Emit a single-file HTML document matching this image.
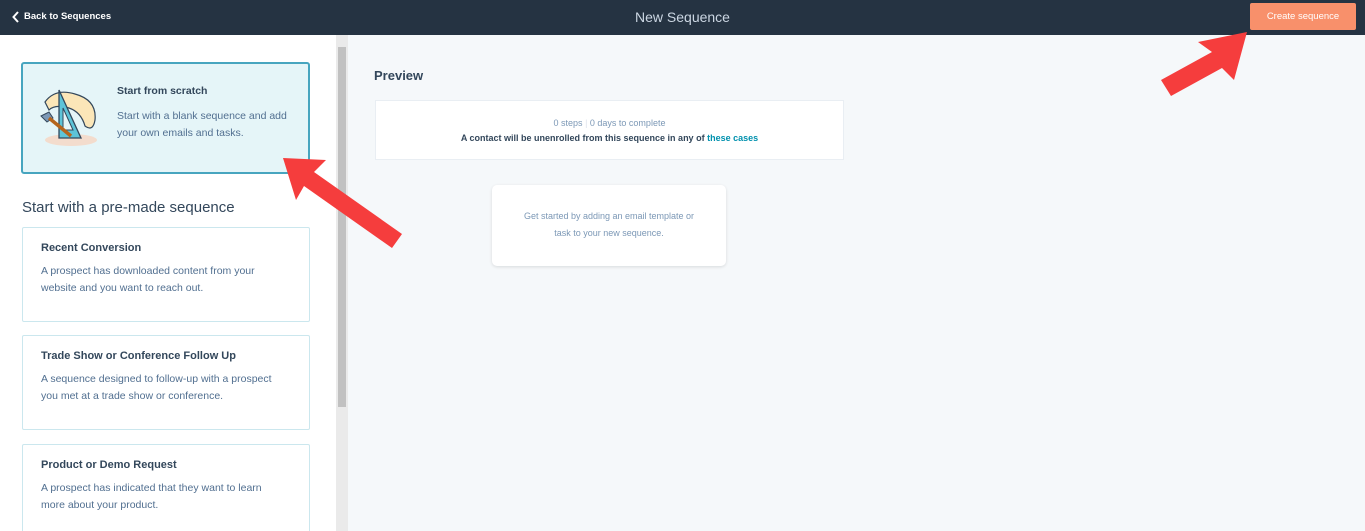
<!DOCTYPE html>
<html><head><meta charset="utf-8">
<style>
*{box-sizing:border-box;margin:0;padding:0}
html,body{width:1365px;height:531px;overflow:hidden}
body{font-family:"Liberation Sans",sans-serif;background:#f5f8fa;position:relative}
.top{position:absolute;left:0;top:0;width:1365px;height:35px;background:#253342}
.back{position:absolute;left:24px;top:11px;color:#fff;font-size:9.5px;font-weight:bold}
.chev{position:absolute;left:12px;top:11px}
.title{position:absolute;left:0;width:1365px;top:9px;text-align:center;color:#cbd6e2;font-size:14px}
.btn{position:absolute;left:1250px;top:3px;width:106px;height:27px;background:#f8906b;border-radius:2px;color:#fff;font-size:9.5px;text-align:center;line-height:27px}
.left{position:absolute;left:0;top:35px;width:336px;height:496px;background:#fff}
.sb{position:absolute;left:336px;top:35px;width:12px;height:496px;background:#eaeaea}
.thumb{position:absolute;left:338px;top:47px;width:8px;height:360px;background:#c1c1c1}
.card{position:absolute;left:22px;width:288px;background:#fff;border:1px solid #cbe7ee;border-radius:2px;padding:0 24px 0 18px}
.card h4{font-size:11px;color:#33475b;margin-top:14px}
.card p{font-size:10.5px;color:#516f90;line-height:17px;margin-top:9px}
.sel{position:absolute;left:21px;top:62px;width:289px;height:112px;background:#e5f5f8;border:2px solid #47a5bf;border-radius:3px}
.sel h4{position:absolute;left:94px;top:21px;font-size:10.5px;color:#33475b}
.sel p{position:absolute;left:94px;top:44px;font-size:10.5px;color:#516f90;line-height:16.5px;width:190px}
.pre{position:absolute;left:22px;top:199px;font-size:15px;color:#33475b}
.prev{position:absolute;left:374px;top:68px;font-size:13px;color:#33475b;font-weight:bold}
.box1{position:absolute;left:375px;top:100px;width:469px;height:60px;background:#fff;border:1px solid #e9eef3;text-align:center}
.box2{position:absolute;left:492px;top:185px;width:234px;height:81px;background:#fff;border-radius:5px;box-shadow:0 1px 3px rgba(0,0,0,.12);text-align:center;font-size:9px;color:#7c98b6;line-height:16.5px;padding-top:23px}
</style></head><body>
<div class="top">
<svg class="chev" width="8" height="12"><path d="M6 1L1.5 6L6 11" stroke="#fff" stroke-width="2" fill="none"/></svg>
<div class="back">Back to Sequences</div>
<div class="title">New Sequence</div>
<div class="btn">Create sequence</div>
</div>
<div class="left"></div>
<div class="sb"></div><div class="thumb"></div>
<div class="sel">
<svg style="position:absolute;left:12px;top:16px" width="72" height="70" viewBox="0 0 72 70">
<ellipse cx="36" cy="60" rx="26" ry="6" fill="#f3dccd"/>
<path d="M10 22 Q20 8 40 14 Q62 20 60 40 Q58 52 50 46 Q46 32 34 28 Q20 24 14 30Z" fill="#fbe6b8" stroke="#33475b" stroke-width="1.2"/>
<path d="M24 10 L24 58 L46 58Z" fill="#5ec4d8" stroke="#33475b" stroke-width="1.3"/>
<path d="M28 28 L28 50 L38 50Z" fill="#e5f5f8" stroke="#33475b" stroke-width="1"/>
<path d="M6 36 L14 32 L18 38 L12 42Z" fill="#7c98b6" stroke="#33475b"/>
<path d="M14 38 L36 56" stroke="#b5651d" stroke-width="3.5"/>
</svg>
<h4>Start from scratch</h4>
<p>Start with a blank sequence and add your own emails and tasks.</p>
</div>
<div class="pre">Start with a pre-made sequence</div>
<div class="card" style="top:227px;height:95px"><h4>Recent Conversion</h4><p>A prospect has downloaded content from your website and you want to reach out.</p></div>
<div class="card" style="top:335px;height:95px"><h4>Trade Show or Conference Follow Up</h4><p>A sequence designed to follow-up with a prospect you met at a trade show or conference.</p></div>
<div class="card" style="top:444px;height:100px"><h4>Product or Demo Request</h4><p>A prospect has indicated that they want to learn more about your product.</p></div>
<div class="prev">Preview</div>
<div class="box1">
<div style="font-size:9px;color:#7c98b6;margin-top:17px">0 steps <span style="color:#dfe3eb">|</span> 0 days to complete</div>
<div style="font-size:9px;color:#33475b;font-weight:bold;margin-top:5px">A contact will be unenrolled from this sequence in any of <span style="color:#0091ae">these cases</span></div>
</div>
<div class="box2">Get started by adding an email template or<br>task to your new sequence.</div>
<svg style="position:absolute;left:0;top:0" width="1365" height="531">
<polygon points="283,158 326,160 314,172 402,234 392,248 304,186 296,200" fill="#f53d3d"/>
<polygon points="1247,32 1234,80 1222,68 1171,96 1161,80 1212,52 1198,42" fill="#f53d3d"/>
</svg>
</body></html>
